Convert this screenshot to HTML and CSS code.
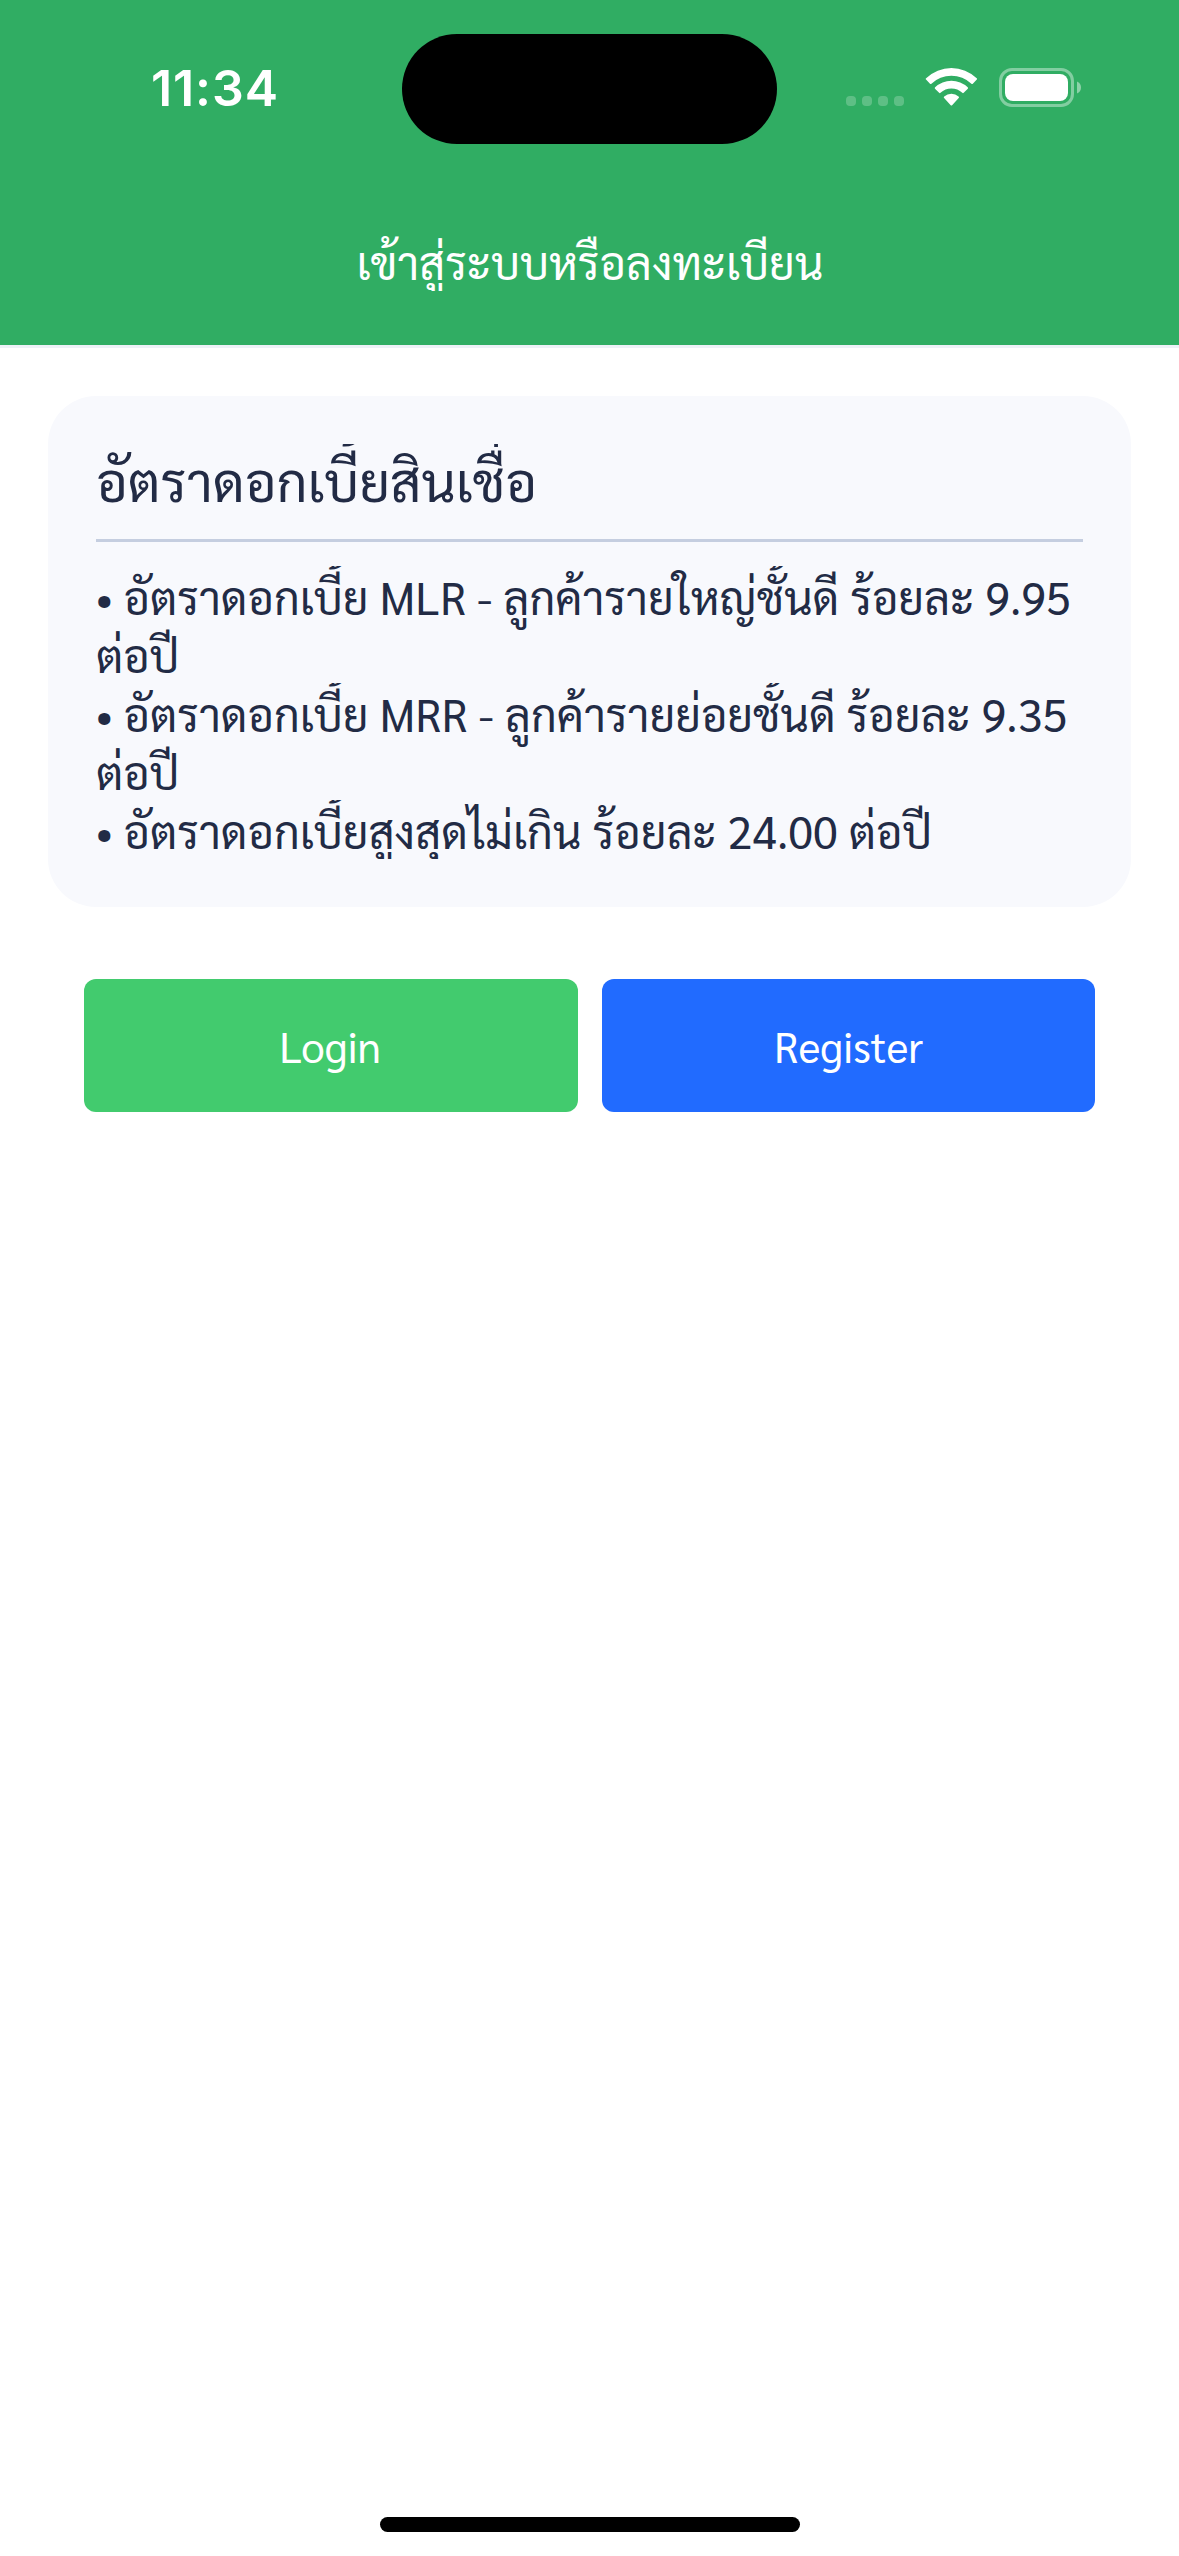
FILE: index.html
```html
<!DOCTYPE html>
<html lang="th">
<head>
<meta charset="utf-8">
<title>เข้าสู่ระบบหรือลงทะเบียน</title>
<link rel="stylesheet" href="styles.css">
</head>
<body>
<div class="screen">
  <header class="header">
    <div class="status-bar">
      <div class="time">11:34</div>
      <div class="island"></div>
      <svg class="status-icons" width="240" height="45" viewBox="0 0 240 45" fill="#fff">
        <g opacity=".22">
          <rect x="4" y="30" width="10" height="10" rx="4"/>
          <rect x="20" y="30" width="10" height="10" rx="4"/>
          <rect x="36" y="30" width="10" height="10" rx="4"/>
          <rect x="52" y="30" width="10" height="10" rx="4"/>
        </g>
        <path d="M84 13.6a1 1 0 0 1 .1-1.4a36.500 36.500 0 0 1 50.600 0a1 1 0 0 1 .1 1.400l-4 4.100a1 1 0 0 1-1.400 0a29 29 0 0 0-40 0a1 1 0 0 1-1.400 0z"/>
        <path d="M93 22.700a1 1 0 0 1 .1-1.400a23.700 23.700 0 0 1 32.600 0a1 1 0 0 1 .1 1.400l-4.100 4.100a1 1 0 0 1-1.400 0a16 16 0 0 0-21.800 0a1 1 0 0 1-1.400 0z"/>
        <path d="M102.100 32a1 1 0 0 1 .1-1.500a11 11 0 0 1 14.400 0a1 1 0 0 1 .1 1.500l-6.600 7.200a1 1 0 0 1-1.400 0z"/>
        <rect x="158.500" y="3.500" width="72" height="36" rx="11.500" fill="none" stroke="#fff" stroke-width="3" opacity=".4"/>
        <rect x="163" y="8" width="63" height="27" rx="8"/>
        <path d="M235 15.500c2.500 1 4 3.300 4 6s-1.500 5-4 6z" opacity=".45"/>
      </svg>
    </div>
    <h1 class="page-title">เข้าสู่ระบบหรือลงทะเบียน</h1>
  </header>
  <main class="content">
    <section class="card">
      <h2 class="card-title">อัตราดอกเบี้ยสินเชื่อ</h2>
      <div class="rates">
        <p class="rate">• อัตราดอกเบี้ย MLR - ลูกค้ารายใหญ่ชั้นดี ร้อยละ 9.95 ต่อปี</p>
        <p class="rate">• อัตราดอกเบี้ย MRR - ลูกค้ารายย่อยชั้นดี ร้อยละ 9.35 ต่อปี</p>
        <p class="rate">• อัตราดอกเบี้ยสูงสุดไม่เกิน ร้อยละ 24.00 ต่อปี</p>
      </div>
    </section>
    <div class="actions">
      <button class="button login" type="button">Login</button>
      <button class="button register" type="button">Register</button>
    </div>
  </main>
  <div class="home-indicator"></div>
</div>
</body>
</html>
```
FILE: styles.css
```css
* { box-sizing: border-box; }

body {
  margin: 0;
  background: #fff;
  color: #222b45;
  font-family: "Sarabun", "Noto Sans Thai", "Noto Sans", sans-serif;
}

.screen {
  display: flex;
  flex-direction: column;
  width: 1179px;
  height: 2556px;
}

.header {
  height: 348px;
  background: #30ad63;
  border-bottom: 3px solid #edf1f7;
  color: #fff;
}

.status-bar {
  display: grid;
  grid-template-columns: 402px 375px 402px;
  height: 233px;
  padding-top: 34px;
  align-items: start;
}

.time {
  padding: 24px 0 0 151px;
  font: 600 50px/60px "Inter", sans-serif;
  letter-spacing: 0.9px;
}

.island {
  height: 110px;
  border-radius: 55px;
  background: #000;
}

.status-icons {
  display: block;
  margin: 32px 0 0 65px;
}

.page-title {
  height: 58px;
  margin: 0;
  padding-left: 1px;
  overflow: hidden;
  font-size: 45px;
  font-weight: 400;
  line-height: 57px;
  text-align: center;
}

.content {
  flex: 1;
  padding: 48px 48px 0;
}

.card {
  padding: 48px;
  border-radius: 48px;
  background: #f8f9fd;
}

.card-title {
  margin: 0;
  overflow: hidden;
  font-size: 54px;
  font-weight: 400;
  line-height: 71px;
}

.rates {
  margin-top: 24px;
  padding-top: 24px;
  border-top: 3px solid #c5cee0;
}

.rate {
  height: 117px;
  margin: 0;
  padding-top: 1px;
  overflow: hidden;
  font-size: 45px;
  line-height: 58px;
}

.rate:last-child { height: 59px; }

.actions {
  display: grid;
  grid-template-columns: 494px 493px;
  gap: 24px;
  margin-top: 72px;
  padding: 0 36px;
}

.button {
  height: 133px;
  padding: 0;
  border: 0;
  border-radius: 12px;
  color: #fff;
  font-family: inherit;
  font-size: 42px;
  font-weight: 400;
}

.login {
  padding-right: 2px;
  background: #42cb6e;
}

.register { background: #216bff; }

.home-indicator {
  width: 420px;
  height: 15px;
  margin: 0 auto 24px;
  border-radius: 8px;
  background: #000;
}
```
